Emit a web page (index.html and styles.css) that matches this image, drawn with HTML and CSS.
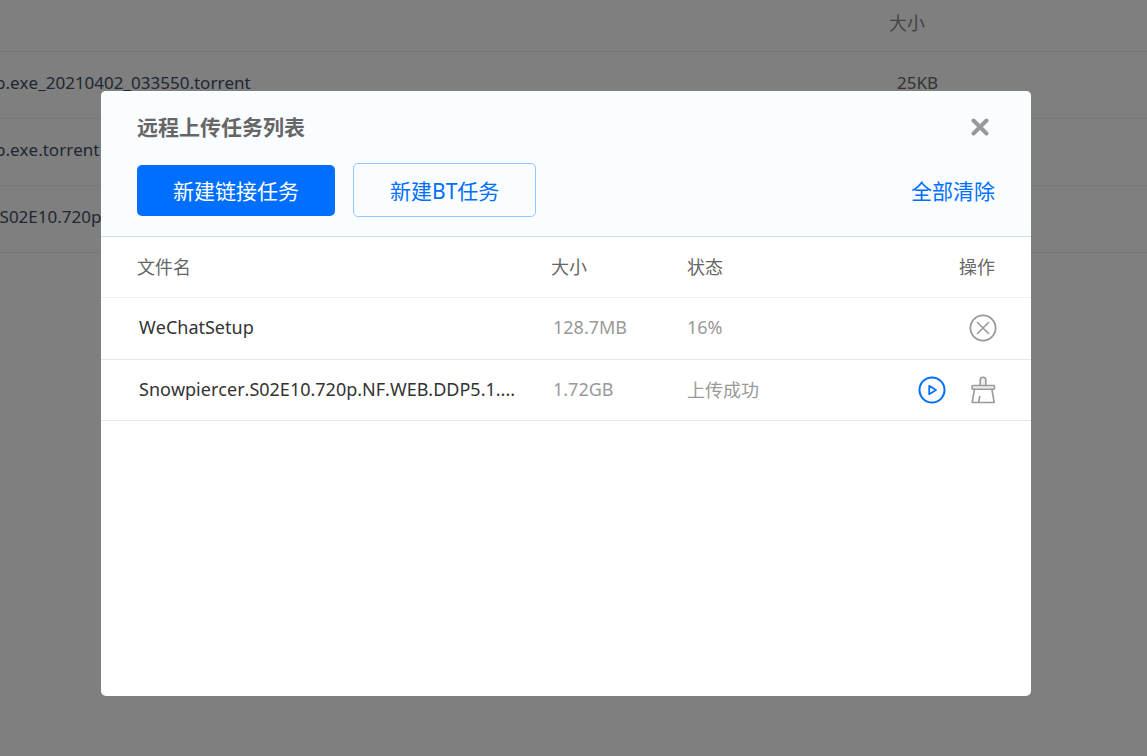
FILE: index.html
```html
<!DOCTYPE html>
<html lang="zh-CN">
<head>
    <meta charset="UTF-8">
    <meta name="viewport" content="width=device-width, initial-scale=1.0">
    <title>远程上传任务列表</title>
    <link rel="stylesheet" href="styles.css">
</head>
<body>
    <!-- 文件列表 -->
    <div class="page">
        <table class="files">
            <tr>
                <th class="file-name"></th>
                <th class="file-size">大小</th>
            </tr>
            <tr>
                <td class="file-name">p.exe_20210402_033550.torrent</td>
                <td class="file-size">25KB</td>
            </tr>
            <tr>
                <td class="file-name">p.exe.torrent</td>
                <td class="file-size"></td>
            </tr>
            <tr>
                <td class="file-name">.S02E10.720p</td>
                <td class="file-size"></td>
            </tr>
        </table>
    </div>

    <!-- 弹窗 -->
    <div class="mask">
        <div class="dialog" role="dialog" aria-labelledby="dialog-title">
            <div class="dialog-head">
                <div class="title-row">
                    <h2 id="dialog-title">远程上传任务列表</h2>
                    <button type="button" class="icon-btn close" aria-label="关闭">
                        <svg width="18" height="18" viewBox="0 0 18 18">
                            <path d="M2.5 2.5L15.5 15.5M15.5 2.5L2.5 15.5" fill="none" stroke="#999" stroke-width="4" stroke-linecap="round"/>
                        </svg>
                    </button>
                </div>
                <div class="tool-row">
                    <button type="button" class="btn btn-primary">新建链接任务</button>
                    <button type="button" class="btn btn-line">新建BT任务</button>
                    <a href="#" class="clear">全部清除</a>
                </div>
            </div>
            <table class="tasks">
                <thead>
                    <tr>
                        <th class="name">文件名</th>
                        <th class="size">大小</th>
                        <th class="state">状态</th>
                        <th class="ops">操作</th>
                    </tr>
                </thead>
                <tbody>
                    <tr>
                        <td class="name">WeChatSetup</td>
                        <td class="size">128.7MB</td>
                        <td class="state">16%</td>
                        <td class="ops">
                            <div class="op-list">
                                <button type="button" class="icon-btn" aria-label="取消">
                                    <svg width="28" height="28" viewBox="0 0 28 28" fill="none" stroke="#999" stroke-linecap="round">
                                        <circle cx="14" cy="14" r="12.6" stroke-width="1.8"/>
                                        <path d="M8.5 8.5L19.5 19.5M19.5 8.5L8.5 19.5" stroke-width="1.6"/>
                                    </svg>
                                </button>
                            </div>
                        </td>
                    </tr>
                    <tr>
                        <td class="name">Snowpiercer.S02E10.720p.NF.WEB.DDP5.1....</td>
                        <td class="size">1.72GB</td>
                        <td class="state">上传成功</td>
                        <td class="ops">
                            <div class="op-list">
                                <button type="button" class="icon-btn" aria-label="播放">
                                    <svg width="28" height="28" viewBox="0 0 28 28" fill="none" stroke="#006eff" stroke-linejoin="round">
                                        <circle cx="14" cy="14" r="12.5" stroke-width="2"/>
                                        <path d="M11.2 9.8V18.2L18 14Z" stroke-width="1.7"/>
                                    </svg>
                                </button>
                                <button type="button" class="icon-btn" aria-label="清除">
                                    <svg width="28" height="28" viewBox="0 0 28 28" fill="none" stroke="#999" stroke-width="1.6" stroke-linejoin="round" stroke-linecap="round">
                                        <path d="M11.2 9.5V3.8Q11.2 1.2 14 1.2T16.8 3.8V9.5" fill="#eee"/>
                                        <rect x="3" y="9.5" width="22.5" height="3.7" rx="1" fill="#eee"/>
                                        <path d="M5.5 13.2L3.2 26.5H25.2L22.9 13.2M10.8 20.5L9.6 26"/>
                                    </svg>
                                </button>
                            </div>
                        </td>
                    </tr>
                </tbody>
            </table>
        </div>
    </div>
</body>
</html>
```

FILE: styles.css
```css
*{
    box-sizing: border-box;
}
body{
    margin: 0;
    background: #fff;
    overflow: hidden;
    font-family: "Noto Sans", "Noto Sans CJK SC", sans-serif;
    font-kerning: none;
}
table{
    width: 100%;
    border-collapse: collapse;
    table-layout: fixed;
}
th, td{
    padding: 0 0 2px;
    text-align: left;
    font-weight: normal;
    white-space: nowrap;
}

/* 文件列表 */
.files tr{
    height: 67px;
    border-bottom: 1px solid #f0f0f0;
}
.files tr:first-child{
    height: 51px;
}
.files th{
    font-size: 18px;
    color: #888;
    padding-bottom: 6px;
}
.files td{
    font-size: 17px;
    color: #424e67;
    padding-bottom: 4px;
}
.files td.file-size{
    color: #666;
    padding-left: 8px;
}
.files .file-size{
    width: 258px;
}
.files .file-name{
    text-indent: -5px;
}

/* 遮罩 */
.mask{
    position: fixed;
    inset: 0;
    display: flex;
    padding: 91px 116px 60px 101px;
    background: rgba(0,0,0,.5);
}
.dialog{
    flex: 1;
    background: #fff;
    border-radius: 5px;
    overflow: hidden;
}
.dialog-head{
    padding: 19px 36px 19px;
    background: #f9fdff;
    border-bottom: 1px solid #cfe0e8;
}
.title-row, .tool-row{
    display: flex;
    align-items: center;
}
.title-row{
    justify-content: space-between;
    height: 33px;
    margin-bottom: 20px;
    padding-right: 6px;
}
.title-row h2{
    margin: 0;
    font-size: 21px;
    line-height: 32px;
    color: #666;
}
.icon-btn{
    display: block;
    padding: 0;
    border: 0;
    background: none;
    cursor: pointer;
}
.icon-btn svg{
    display: block;
}
.tool-row{
    gap: 18px;
}
.btn{
    padding: 0 36px;
    border: 0;
    border-radius: 5px;
    font-family: inherit;
    font-size: 21px;
    cursor: pointer;
}
.btn-primary{
    height: 51px;
    background: #006eff;
    color: #fff;
}
.btn-line{
    height: 54px;
    border: 1px solid #97c5ff;
    background: none;
    color: #006eff;
}
.clear{
    margin-left: auto;
    font-size: 21px;
    color: #006eff;
    text-decoration: none;
}

/* 任务表格 */
.tasks tr{
    height: 61px;
    border-bottom: 1px solid #e8e8e8;
}
.tasks thead tr{
    height: 60px;
    border-color: #f0f0f0;
}
.tasks tbody tr:first-child{
    height: 62px;
}
.tasks th{
    font-size: 18px;
    color: #666;
}
.tasks td{
    font-size: 18px;
    color: #999;
}
.tasks .name{
    width: 450px;
    padding-left: 36px;
}
.tasks td.name{
    padding-left: 38px;
    color: #333;
}
.tasks .size{
    width: 136px;
}
.tasks td.size{
    padding-left: 2px;
}
.tasks .ops{
    padding-right: 36px;
    text-align: right;
}
.tasks td.ops{
    padding-right: 34px;
    padding-bottom: 0;
}
.op-list{
    display: flex;
    justify-content: flex-end;
    gap: 23px;
}
```
